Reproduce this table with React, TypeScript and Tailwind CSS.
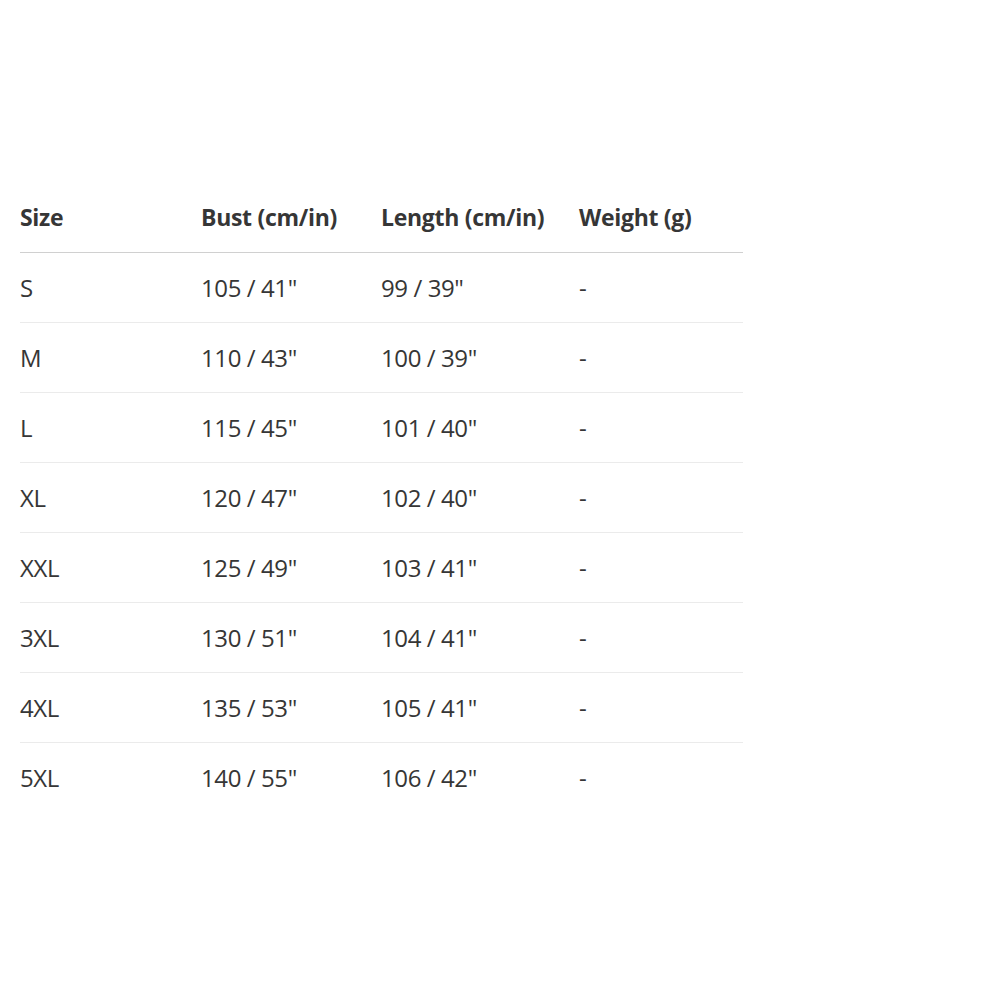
export default function App() {
  const rows: [string, string, string, string][] = [
    ["S", '105 / 41"', '99 / 39"', "-"],
    ["M", '110 / 43"', '100 / 39"', "-"],
    ["L", '115 / 45"', '101 / 40"', "-"],
    ["XL", '120 / 47"', '102 / 40"', "-"],
    ["XXL", '125 / 49"', '103 / 41"', "-"],
    ["3XL", '130 / 51"', '104 / 41"', "-"],
    ["4XL", '135 / 53"', '105 / 41"', "-"],
    ["5XL", '140 / 55"', '106 / 42"', "-"],
  ];
  const cols = "grid grid-cols-[181px_180px_198px_164px]";
  return (
    <div className="w-[1000px] h-[1000px] bg-white pt-[183px] pl-[20px]" style={{ fontFamily: '"Open Sans", sans-serif' }}>
      <div className="w-[723px] text-[#363636]">
        <div className={`${cols} h-[70px] items-center border-b border-[#d0d0d0] text-[23px] font-bold tracking-[-0.3px]`}>
          <div>Size</div>
          <div>Bust (cm/in)</div>
          <div>Length (cm/in)</div>
          <div>Weight (g)</div>
        </div>
        {rows.map((r, i) => (
          <div key={i} className={`${cols} h-[70px] items-center text-[24px] tracking-[-0.4px] ${i < rows.length - 1 ? "border-b border-[#ebebeb]" : ""}`}>
            {r.map((c, j) => (
              <div key={j}>{c}</div>
            ))}
          </div>
        ))}
      </div>
    </div>
  );
}
